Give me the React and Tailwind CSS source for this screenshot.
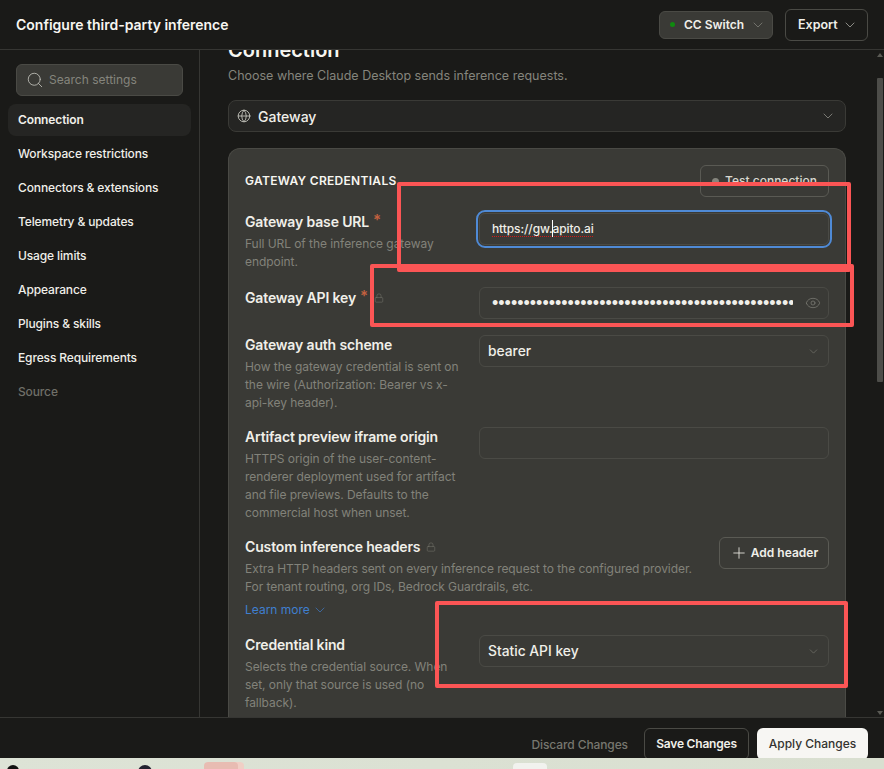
import React from "react";
import { ChevronDown, Eye, Globe, Lock, Plus, Search } from "lucide-react";

const nav = ["Workspace restrictions", "Connectors & extensions", "Telemetry & updates", "Usage limits", "Appearance", "Plugins & skills", "Egress Requirements"];

function Label({ children, req, lock }) {
  return (
    <div className="-mt-px flex items-center h-[19px] text-[14px] leading-[19px] font-semibold tracking-[-0.15px] text-[#f0efe9]">
      <span>{children}</span>
      {req && <span className="ml-1 text-[15px] text-[#c2603f] self-start -mt-[2px]">*</span>}
      {lock && <Lock size={10} strokeWidth={1.25} className="ml-1.5 text-[#77776f]" />}
    </div>
  );
}

function Desc({ children }) {
  return <p className="mt-1 text-[12px] leading-[18px] tracking-[-0.06px] text-[#82827a]">{children}</p>;
}

function Box({ children, className = "" }) {
  return <div className={"w-[350px] h-8 shrink-0 rounded-md border border-[#4a4a45] flex items-center px-2 text-[13.8px] font-medium text-[#f0efe9] " + className}>{children}</div>;
}

function Row({ children, right, className = "", leftClass = "pt-px" }) {
  return (
    <div className={"flex justify-between " + className}>
      <div className={"w-[218px] " + leftClass}>{children}</div>
      {right}
    </div>
  );
}

function RedBox({ className }) {
  return <div className={"absolute border-4 border-[#fb5555] rounded-[2px] pointer-events-none " + className} />;
}

export default function App() {
  return (
    <div className="relative w-[884px] h-[769px] overflow-hidden flex flex-col bg-[#1a1a18] text-[#f0efe9] font-['Inter',sans-serif]">
      <header className="h-[50px] shrink-0 flex items-center border-b border-[#363633] pl-4 pr-4">
        <h1 className="text-[14px] font-semibold text-[#f7f6f1]">Configure third-party inference</h1>
        <div className="ml-auto flex items-center gap-3">
          <button className="h-7 w-[114px] rounded-md bg-[#3a3a36] border border-[#4a4a45] flex items-center pl-[10px] text-[12px] font-semibold">
            <span className="w-[5px] h-[5px] rounded-full bg-[#0f8a0f] mr-[9px]" />
            CC Switch
            <ChevronDown size={16} strokeWidth={1} className="ml-1.5 text-[#8e8e86]" />
          </button>
          <button className="h-8 w-[83px] rounded-md border border-[#4a4a45] flex items-center pl-3 pt-px text-[12.5px] font-semibold">
            Export
            <ChevronDown size={16} strokeWidth={1} className="ml-1 text-[#c5c5bd]" />
          </button>
        </div>
      </header>

      <div className="flex-1 min-h-0 flex">
        <aside className="w-[200px] shrink-0 border-r border-[#363633] px-2 pt-[14px]">
          <div className="mx-2 w-[167px] h-8 rounded-md bg-[#3a3a36] border border-[#4a4a45] flex items-center pl-[9px] text-[12px] text-[#85857d]">
            <Search size={18} strokeWidth={1.1} className="text-[#c5c5bd] mr-[5px]" />
            Search settings
          </div>
          <nav className="mt-2 flex flex-col gap-[2px] text-[12px] tracking-[-0.13px] font-medium">
            <div className="h-8 w-[183px] rounded-lg bg-[#252523] flex items-center px-2.5 font-semibold">Connection</div>
            {nav.map((n) => (
              <div key={n} className="h-8 flex items-center px-2.5">{n}</div>
            ))}
            <div className="h-8 flex items-center px-2.5 text-[#6f6f68]">Source</div>
          </nav>
        </aside>

        <main className="flex-1 min-w-0 overflow-hidden flex">
          <div className="flex-1 min-w-0 pl-7 pr-[30px] -mt-[12px]">
            <h2 className="h-[24px] text-[20px] leading-[24px] font-semibold text-[#f7f6f1]">Connection</h2>
            <p className="mt-[5px] text-[12.5px] leading-[18px] text-[#85857d]">Choose where Claude Desktop sends inference requests.</p>
            <div className="mt-[15px] h-8 rounded-lg bg-[#252523] border border-[#3a3a36] flex items-center pl-[8px] pr-[9px] text-[14px] font-medium">
              <Globe size={14} strokeWidth={1.5} className="text-[#c5c5bd] mr-[7px]" />
              Gateway
              <ChevronDown size={16} strokeWidth={1} className="ml-auto text-[#a5a59d]" />
            </div>
            <section className="mt-4 rounded-t-xl bg-[#3a3a36] border border-b-0 border-[#4a4a45] pl-4 pr-4 pt-4 pb-6 h-[600px]">
              <div className="flex justify-between items-start">
                <h3 className="mt-2 text-[12px] leading-4 font-semibold tracking-[0.3px] text-[#f7f6f1]">GATEWAY CREDENTIALS</h3>
                <button className="w-[129px] h-8 rounded-md border border-[#5a5a54] flex items-center justify-center text-[12px] font-medium text-[#d8d8d0]">
                  <span className="w-[7px] h-[7px] rounded-full bg-[#85857d] mr-[6px]" />
                  Test connection
                </button>
              </div>

              <Row className="mt-4" leftClass="pt-0" right={
                <div className="relative w-[350px] h-8 shrink-0">
                  <div className="absolute -inset-[3px] rounded-[9px] border-2 border-[#4f8ad6]" />
                  <Box className="relative">
                    <span className="pl-[4px] text-[12px] tracking-[-0.1px] underline decoration-dotted decoration-1 decoration-[#d11b1b] underline-offset-[3px]">https://gw.<span className="relative"><span className="absolute left-0 -top-px h-[17px] w-px bg-white" /></span>apito.ai</span>
                  </Box>
                </div>
              }>
                <Label req>Gateway base URL</Label>
                <Desc>Full URL of the inference gateway endpoint.</Desc>
              </Row>

              <Row className="mt-4" leftClass="pt-[2px]" right={
                <Box className="justify-between pr-[7px]">
                  <span className="pl-[4px] w-[305px] h-4 flex items-center overflow-hidden whitespace-nowrap font-['Liberation_Sans',sans-serif] text-[18px] leading-none">{"•".repeat(48)}</span>
                  <Eye size={16} strokeWidth={1} className="text-[#85857d]" />
                </Box>
              }>
                <Label req lock>Gateway API key</Label>
              </Row>

              <Row className="mt-4" right={
                <Box className="justify-between pr-2">
                  <span>bearer</span>
                  <ChevronDown size={13} strokeWidth={1} className="text-[#85857d]" />
                </Box>
              }>
                <Label>Gateway auth scheme</Label>
                <Desc>How the gateway credential is sent on the wire (Authorization: Bearer vs x-api-key header).</Desc>
              </Row>

              <Row className="mt-[15px]" right={<Box />}>
                <Label>Artifact preview iframe origin</Label>
                <Desc>HTTPS origin of the user-content-renderer deployment used for artifact and file previews. Defaults to the commercial host when unset.</Desc>
              </Row>

              <div className="mt-[15px] flex justify-between items-start">
                <div className="w-[460px] pt-px">
                  <Label lock>Custom inference headers</Label>
                  <Desc>Extra HTTP headers sent on every inference request to the configured provider. For tenant routing, org IDs, Bedrock Guardrails, etc.</Desc>
                  <div className="mt-[5px] flex items-center text-[12px] leading-[18px] text-[#3f7fd0]">
                    Learn more
                    <ChevronDown size={16} strokeWidth={1} className="ml-0.5" />
                  </div>
                </div>
                <button className="w-[110px] h-8 rounded-md border border-[#5a5a54] flex items-center justify-center text-[12px] font-semibold">
                  <Plus size={18} strokeWidth={1.1} className="mr-[3px]" />
                  Add header
                </button>
              </div>

              <Row className="mt-4" right={
                <Box className="justify-between pr-2">
                  <span>Static API key</span>
                  <ChevronDown size={13} strokeWidth={1} className="text-[#85857d]" />
                </Box>
              }>
                <Label>Credential kind</Label>
                <Desc>Selects the credential source. When set, only that source is used (no fallback).</Desc>
              </Row>
            </section>
          </div>
          <div className="w-2 shrink-0 relative flex flex-col items-center mr-0">
            <span className="mt-[3px] w-0 h-0 border-x-[3px] border-x-transparent border-b-[4px] border-b-[#5a5a54]" />
            <span className="mt-[21px] w-[6px] h-[304px] rounded-[1px] bg-[#4d4d49]" />
            <span className="mt-auto mb-[2px] w-0 h-0 border-x-[3px] border-x-transparent border-t-[4px] border-t-[#5a5a54]" />
          </div>
        </main>
      </div>

      <footer className="h-[41px] shrink-0 overflow-hidden border-t border-[#363633] bg-[#1a1a18] flex items-start justify-end pr-4 pt-[10px] text-[12px]">
        <span className="mt-2 mr-4 text-[#77776f] font-medium tracking-[-0.1px]">Discard Changes</span>
        <button className="w-[105px] h-8 shrink-0 rounded-md border border-[#4a4a45] font-semibold tracking-[-0.2px]">Save Changes</button>
        <button className="ml-2 w-[111px] h-8 shrink-0 rounded-md bg-[#f7f6f3] text-[#33332f] font-medium">Apply Changes</button>
      </footer>

      <div className="h-[11px] shrink-0 relative overflow-hidden bg-gradient-to-r from-[#dde3d6] to-[#d9dfd0]">
        <span className="absolute left-[7px] top-[7px] w-3 h-3 rounded-full bg-[#111]" />
        <span className="absolute left-[138px] top-[7px] w-[14px] h-[14px] rounded-full bg-[#222230]" />
        <span className="absolute left-[208px] top-[4px] w-[36px] h-4 rounded bg-[#f0cfc5]" />
        <span className="absolute left-[204px] top-[4px] w-[34px] h-4 rounded bg-[#e8bcb2]" />
        <span className="absolute left-[513px] top-[5px] w-[34px] h-4 rounded bg-[#f1f2ee]" />
      </div>

      <RedBox className="left-[397px] top-[182px] w-[454px] h-[90px]" />
      <RedBox className="left-[370px] top-[264px] w-[484px] h-[63px]" />
      <RedBox className="left-[435px] top-[601px] w-[413px] h-[87px]" />
    </div>
  );
}
